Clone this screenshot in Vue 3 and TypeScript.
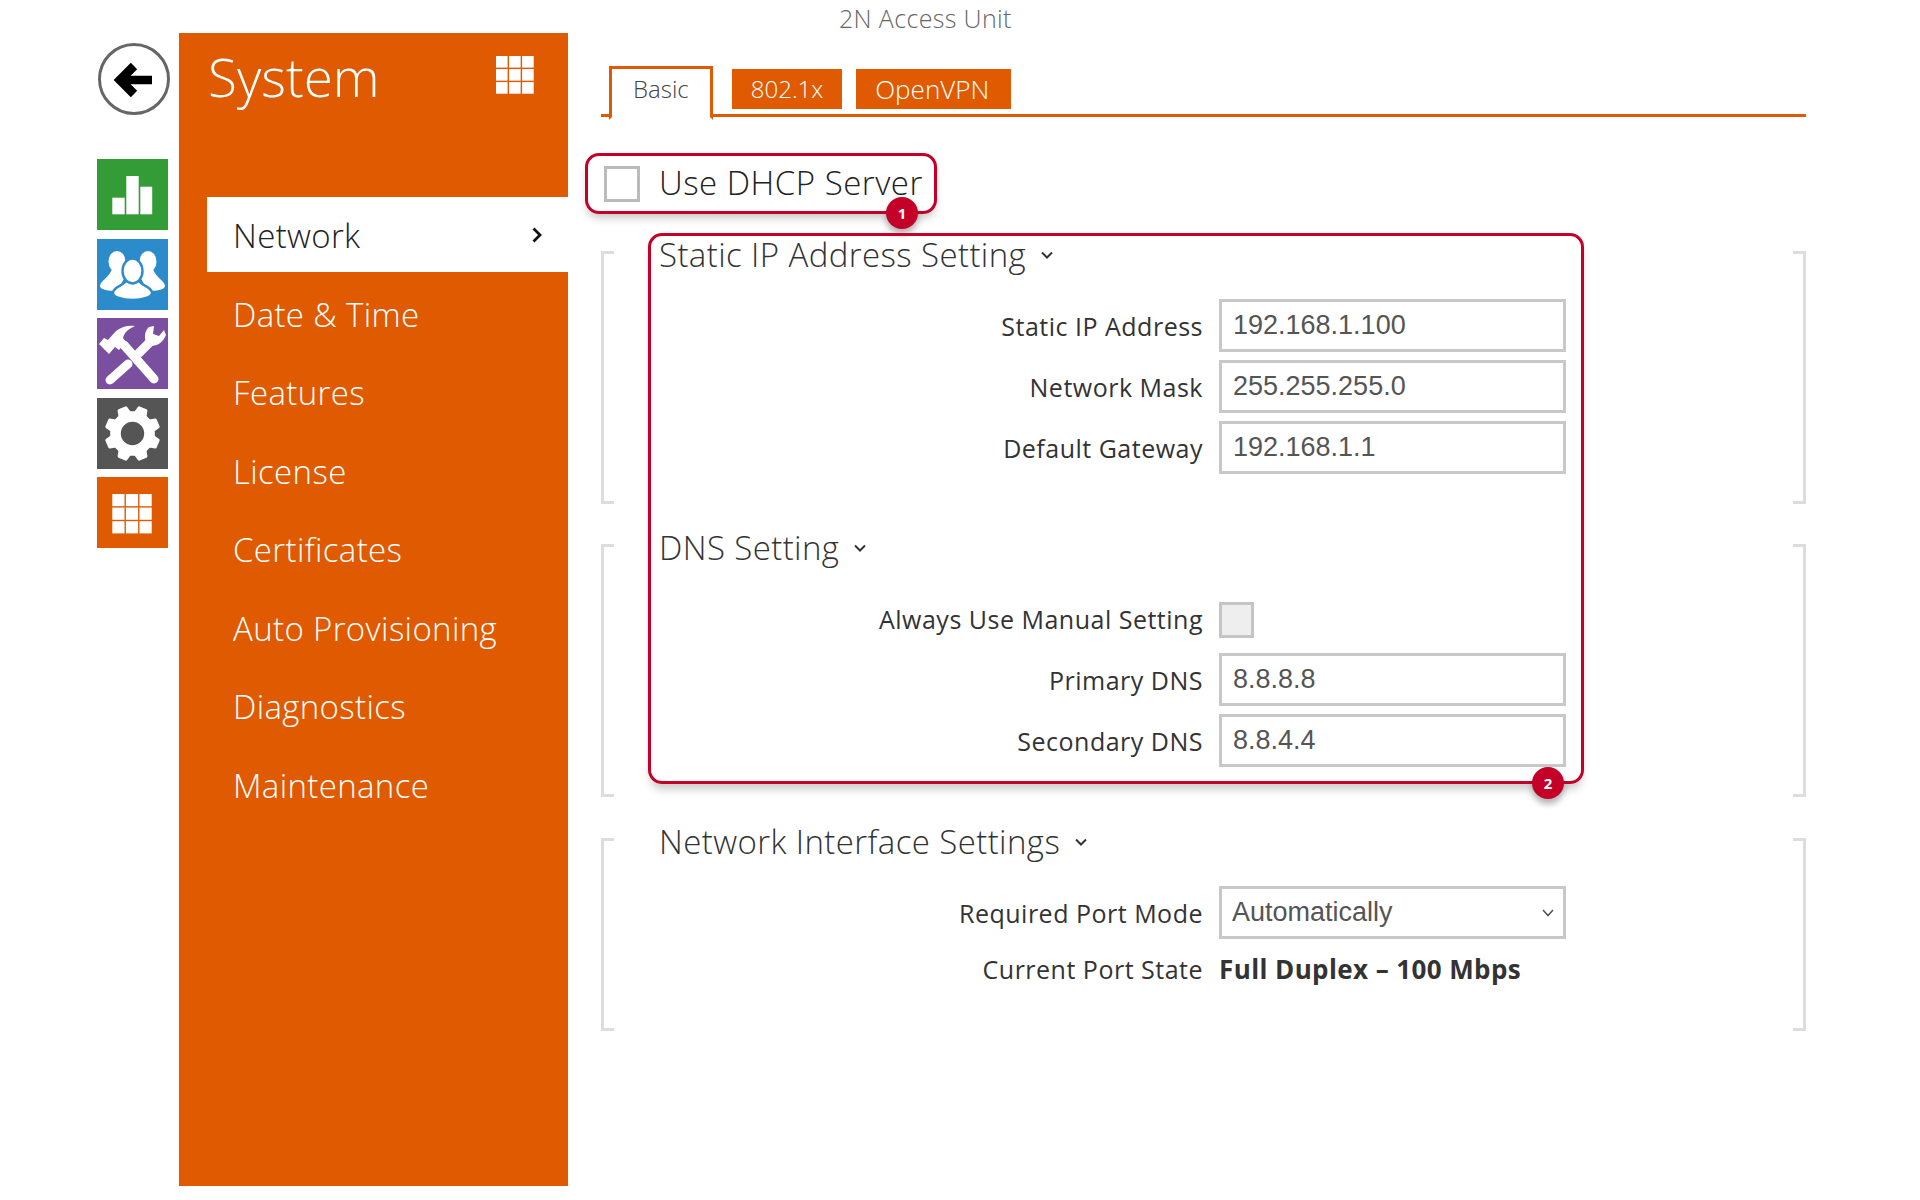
<script setup lang="ts">
const menu = ['Network', 'Date & Time', 'Features', 'License', 'Certificates', 'Auto Provisioning', 'Diagnostics', 'Maintenance']

// 3x3 tile icon used in the rail and the panel header
const cells: number[][] = []
for (let r = 0; r < 3; r++) {
  for (let c = 0; c < 3; c++) cells.push([c * 13.6, r * 13.6])
}

const gearPoints = (() => {
  const pts: string[] = []
  for (let i = 0; i < 8; i++) {
    const mid = (i * 45 + 22.5) * Math.PI / 180
    const d = 14 * Math.PI / 180
    const t = 8 * Math.PI / 180
    const p = [[mid - d, 21], [mid - t, 26.5], [mid + t, 26.5], [mid + d, 21]]
    for (const [a, rad] of p) {
      pts.push(`${(35.5 + Math.cos(a) * rad).toFixed(1)},${(35.5 + Math.sin(a) * rad).toFixed(1)}`)
    }
  }
  return pts.join(' ')
})()
</script>

<template>
  <div class="page">
    <div class="rail">
      <button class="back">
        <svg viewBox="0 0 72 72" width="72" height="72">
          <circle cx="36" cy="36" r="34.5" fill="#fff" stroke="#666" stroke-width="3" />
          <path d="M54 37H24" stroke="#000" stroke-width="8.5" fill="none" />
          <path d="M36 23L22 37L36 51" stroke="#000" stroke-width="9" fill="none" />
        </svg>
      </button>
      <div class="tile green">
        <svg viewBox="0 0 71 71">
          <rect x="15.3" y="38.7" width="12.4" height="16.6" fill="#fff" />
          <rect x="29.3" y="17" width="12.4" height="38.3" fill="#fff" />
          <rect x="43.3" y="27.7" width="11.9" height="27.6" fill="#fff" />
        </svg>
      </div>
      <div class="tile blue">
        <svg viewBox="0 0 71 71">
          <g fill="#fff">
            <ellipse cx="20" cy="22.500" rx="8.500" ry="10.500" />
            <ellipse cx="51" cy="22.500" rx="8.500" ry="10.500" />
            <path d="M15 30h10l3 8-8 14c-8 0-17-1-17-5 0-5 9-8 12-17z" />
            <path d="M56 30H46l-3 8 8 14c8 0 17-1 17-5 0-5-9-8-12-17z" />
          </g>
          <g fill="#fff" stroke="#2c8bcb" stroke-width="2.400">
            <path d="M29 42h13c3 5 13 6 13 12 0 4-9 7-19.500 7S16 58 16 54c0-6 10-7 13-12z" />
            <ellipse cx="35.500" cy="32" rx="10" ry="12.500" />
          </g>
        </svg>
      </div>
      <div class="tile purple">
        <svg viewBox="0 0 71 71">
          <path d="M13 62L31 46" stroke="#fff" stroke-width="9" stroke-linecap="round" fill="none" />
          <path d="M42 35L56 21" stroke="#fff" stroke-width="9" stroke-linecap="round" fill="none" />
          <path d="M27 27L57 61" stroke="#fff" stroke-width="9" stroke-linecap="round" fill="none" />
          <path d="M2 26L7 20L11 22L19 13C25 8 32 7 38 8C31 11 27 15 26 20L29 24L22 32L18 29L12 36Z" fill="#fff" />
          <path d="M52 9C47 13 47 21 50 26C56 30 65 27 69 17L67 12L62 18L56 16L57 8Z" fill="#fff" />
        </svg>
      </div>
      <div class="tile grey">
        <svg viewBox="0 0 71 71">
          <polygon :points="gearPoints" fill="#fff" stroke="#fff" stroke-width="3" stroke-linejoin="round" />
          <circle cx="35.500" cy="35.500" r="11.700" fill="#555" />
        </svg>
      </div>
      <div class="tile orange">
        <svg viewBox="0 0 71 71">
          <rect v-for="(c, i) in cells" :key="i" :x="15.300 + c[0]" :y="17 + c[1]" width="12.200" height="12.200" fill="#fff" />
        </svg>
      </div>
    </div>

    <aside class="panel">
      <header class="panel-head">
        <h1>System</h1>
        <svg class="panel-grid" viewBox="0 0 38 38">
          <rect v-for="(c, i) in cells" :key="i" :x="c[0] * 0.96" :y="c[1] * 0.96" width="11.600" height="11.600" fill="#fff" />
        </svg>
      </header>
      <nav class="menu">
        <a v-for="(item, i) in menu" :key="item" class="menu-item" :class="{ active: i === 0 }">
          {{ item }}
          <svg v-if="i === 0" class="menu-arrow" viewBox="0 0 10 16">
            <path d="M1.500 1.500L8 8L1.500 14.500" fill="none" stroke="#111" stroke-width="2.800" />
          </svg>
        </a>
      </nav>
    </aside>

    <main class="main">
      <div class="title">2N Access Unit</div>

      <div class="tabs">
        <span class="tab current">Basic</span>
        <span class="tab">802.1x</span>
        <span class="tab">OpenVPN</span>
      </div>

      <label class="dhcp">
        <input type="checkbox" class="check" />
        <span class="dhcp-text">Use DHCP Server</span>
        <span class="badge">1</span>
      </label>

      <section class="section sec-ip">
        <h2>Static IP Address Setting <svg class="caret" viewBox="0 0 12 8"><path d="M1 1.500L6 6.500L11 1.500" fill="none" stroke="#333" stroke-width="2" /></svg></h2>
        <div class="row"><label>Static IP Address</label><input class="field" value="192.168.1.100" /></div>
        <div class="row"><label>Network Mask</label><input class="field" value="255.255.255.0" /></div>
        <div class="row"><label>Default Gateway</label><input class="field" value="192.168.1.1" /></div>
      </section>

      <section class="section sec-dns">
        <h2>DNS Setting <svg class="caret" viewBox="0 0 12 8"><path d="M1 1.500L6 6.500L11 1.500" fill="none" stroke="#333" stroke-width="2" /></svg></h2>
        <div class="row row-check"><label>Always Use Manual Setting</label><input type="checkbox" class="check check-grey" /></div>
        <div class="row"><label>Primary DNS</label><input class="field" value="8.8.8.8" /></div>
        <div class="row"><label>Secondary DNS</label><input class="field" value="8.8.4.4" /></div>
      </section>

      <section class="section sec-port">
        <h2>Network Interface Settings <svg class="caret" viewBox="0 0 12 8"><path d="M1 1.500L6 6.500L11 1.500" fill="none" stroke="#333" stroke-width="2" /></svg></h2>
        <div class="row">
          <label>Required Port Mode</label>
          <div class="select-wrap">
            <select class="field select"><option>Automatically</option></select>
            <svg class="select-caret" viewBox="0 0 12 8"><path d="M1 1L6 6.500L11 1" fill="none" stroke="#555" stroke-width="1.600" /></svg>
          </div>
        </div>
        <div class="row row-state"><label>Current Port State</label><strong>Full Duplex – 100 Mbps</strong></div>
      </section>

      <div class="highlight"><span class="badge badge-two">2</span></div>
    </main>
  </div>
</template>

<style>
body {
  background: #fff;
}
</style>

<style scoped>
.page {
  display: flex;
  width: 1920px;
  height: 1200px;
  overflow: hidden;
  font-family: "Open Sans", "Liberation Sans", sans-serif;
  color: #333;
}

.rail {
  width: 71px;
  margin-left: 97px;
  margin-right: 11px;
  display: flex;
  flex-direction: column;
  gap: 8.500px;
}
.back {
  width: 72px;
  height: 72px;
  margin: 43px 0 35.500px 1px;
  padding: 0;
  border: none;
  background: none;
}
.back svg { display: block; }
.tile {
  width: 71px;
  height: 71px;
  flex: none;
}
.tile svg { display: block; width: 71px; height: 71px; }
.green { background: #339c37; }
.blue { background: #2c8bcb; }
.purple { background: #7a4fa0; }
.grey { background: #555; }
.orange { background: #df5a00; }

.panel {
  width: 389px;
  height: 1153px;
  margin-top: 33px;
  background: #df5a00;
  color: #fff;
}
.panel-head {
  height: 164px;
  padding: 0 34px 0 29px;
  display: flex;
  justify-content: space-between;
  align-items: flex-start;
}
.panel-head h1 {
  margin: 11px 0 0;
  font-size: 53px;
  line-height: 66px;
  font-weight: 300;
}
.panel-grid {
  width: 38px;
  height: 38px;
  margin-top: 23px;
}
.menu {
  margin-left: 28px;
  display: flex;
  flex-direction: column;
}
.menu-item {
  position: relative;
  height: 75px;
  margin-bottom: 3.500px;
  padding-left: 26px;
  font-size: 33px;
  font-weight: 300;
  line-height: 78px;
  letter-spacing: 0.35px;
  color: #fff;
}
.menu-item.active {
  background: #fff;
  color: #222;
}
.menu-arrow {
  position: absolute;
  left: 325px;
  top: 30px;
  width: 10px;
  height: 16px;
}

.main {
  position: relative;
  width: 1205px;
  margin-left: 33px;
}
.title {
  height: 65px;
  padding-left: 238px;
  padding-top: 1px;
  font-size: 25px;
  font-weight: 300;
  line-height: 34px;
  letter-spacing: 0.35px;
  color: #666;
}
.tabs {
  height: 51px;
  padding-left: 8px;
  display: flex;
  align-items: flex-start;
  gap: 14px;
  border-bottom: 3px solid #df5a00;
  box-sizing: border-box;
}
.tab {
  height: 40px;
  margin-top: 3px;
  padding: 0 19px;
  background: #df5a00;
  color: #fff;
  font-size: 24px;
  font-weight: 300;
  line-height: 40px;
}
.tab:last-child {
  padding-right: 22px;
  font-size: 26px;
}
.tab.current {
  height: 48px;
  margin-top: 0;
  margin-right: 5px;
  padding: 0 21px;
  background: #fff;
  color: #444;
  border: 3px solid #df5a00;
  border-bottom: 3px solid #fff;
  line-height: 40px;
}

.dhcp {
  position: relative;
  width: 352px;
  height: 61px;
  margin: 36px 0 37px -16px;
  padding-left: 16px;
  box-sizing: border-box;
  display: flex;
  align-items: center;
  gap: 19px;
  border: 3px solid #c40028;
  border-radius: 14px;
  box-shadow: 0 6px 8px -2px rgba(0, 0, 0, 0.22);
  font-size: 33px;
  font-weight: 300;
  letter-spacing: 0.5px;
  color: #222;
}
.dhcp-text {
  margin-top: -2px;
}
.check {
  appearance: none;
  width: 36px;
  height: 36px;
  margin: 0;
  flex: none;
  box-sizing: border-box;
  border: 3px solid #bbb;
  background: #fff;
}
.check-grey {
  width: 35px;
  background: #eee;
  border-color: #c4c4c4;
}
.badge {
  position: absolute;
  left: 298px;
  top: 41px;
  width: 32px;
  height: 32px;
  border-radius: 50%;
  background: #c40028;
  color: #fff;
  font-size: 15px;
  font-weight: 700;
  line-height: 32px;
  letter-spacing: 0;
  text-align: center;
  box-shadow: 0 5px 6px rgba(0, 0, 0, 0.3);
}

.section {
  position: relative;
  display: flow-root;
  box-sizing: border-box;
  margin-bottom: 40px;
}
.section::before,
.section::after {
  content: "";
  position: absolute;
  top: 0;
  bottom: 0;
  width: 10px;
  border: 3px solid #ddd;
}
.section::before { left: 0; border-right: none; }
.section::after { right: 0; border-left: none; }
.sec-ip { height: 253px; }
.sec-dns { height: 253px; margin-bottom: 41px; }
.sec-port { height: 193px; }

.section h2 {
  display: flex;
  align-items: center;
  height: 32px;
  margin: -12px 0 28px 58px;
  font-size: 33px;
  font-weight: 300;
  line-height: 32px;
  letter-spacing: 0.4px;
  color: #333;
}
.sec-dns h2 { margin-bottom: 38px; }
.caret {
  width: 12px;
  height: 8px;
  margin-left: 15px;
}

.row {
  display: flex;
  align-items: center;
  height: 53px;
  margin-bottom: 8px;
}
.row label {
  width: 618px;
  padding-right: 16px;
  box-sizing: border-box;
  flex: none;
  text-align: right;
  font-size: 25px;
  letter-spacing: 0.5px;
  color: #333;
}
.row-check {
  height: 36px;
  margin-bottom: 15px;
}
.row-check label {
  margin-top: -2px;
}
.row-state { margin-top: -5px; }
.row-state strong {
  font-size: 26px;
  font-weight: 700;
  letter-spacing: 0.4px;
  color: #333;
}

.field {
  width: 347px;
  height: 53px;
  margin: 0;
  padding: 0 11px;
  box-sizing: border-box;
  border: 3px solid #c8c8c8;
  border-radius: 0;
  outline: none;
  background: #fff;
  font-family: "Liberation Sans", sans-serif;
  font-size: 27px;
  color: #555;
}
.select-wrap {
  position: relative;
}
.select {
  display: block;
  appearance: none;
  padding-left: 10px;
  padding-bottom: 2px;
}
.select-caret {
  position: absolute;
  left: 323px;
  top: 23px;
  width: 12px;
  height: 8px;
}

.highlight {
  position: absolute;
  left: 47px;
  top: 233px;
  width: 936px;
  height: 551px;
  box-sizing: border-box;
  border: 3px solid #c40028;
  border-radius: 14px;
  box-shadow: 0 8px 10px -3px rgba(0, 0, 0, 0.22);
  pointer-events: none;
}
.badge-two {
  left: 881px;
  top: 531px;
}
</style>
